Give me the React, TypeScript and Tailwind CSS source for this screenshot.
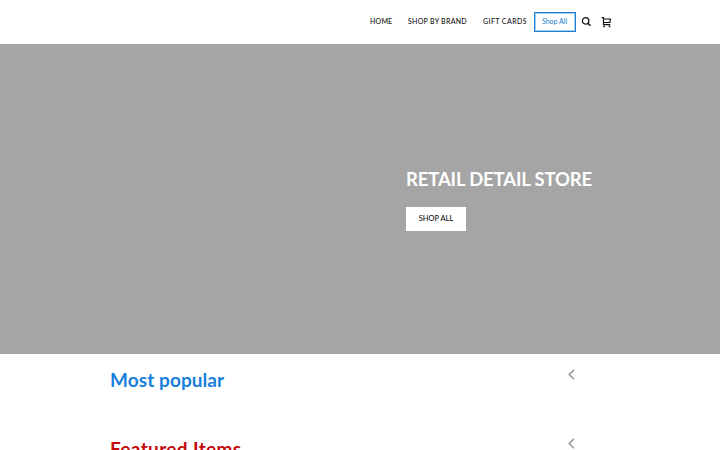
const navLinks = [
  { label: "HOME", style: "w-[22px] tracking-[0.2px]" },
  { label: "SHOP BY BRAND", style: "w-[59px] tracking-[0.28px]" },
  { label: "GIFT CARDS", style: "w-[44px] tracking-[0.42px]" },
];

const SearchIcon = () => (
  <svg viewBox="0 0 10 10" className="size-[10px]" fill="none" stroke="#111" strokeWidth="1.3">
    <circle cx="4.6" cy="3.9" r="3.2" />
    <path d="M6.9 6.2L9.5 8.8" />
  </svg>
);

const CartIcon = () => (
  <svg viewBox="0 0 10 11" className="h-[11px] w-[10px]" fill="none" stroke="#111" strokeWidth="1.2">
    <path d="M0.7 0.7H2.5V7.7H9.3M2.5 2H9.4L8.8 5.5H2.5" />
    <circle cx="3.1" cy="9.4" r="0.9" fill="#111" stroke="none" />
    <circle cx="8.5" cy="9.4" r="0.9" fill="#111" stroke="none" />
  </svg>
);

const Header = () => (
  <header className="flex h-11 items-center justify-end bg-white pr-[109px]">
    <nav className="flex items-center gap-4 pb-px text-[7px] font-medium text-[#111]">
      {navLinks.map((link) => (
        <a key={link.label} href="#" className={`whitespace-nowrap ${link.style}`}>
          {link.label}
        </a>
      ))}
    </nav>
    <a
      href="#"
      className="ml-[7px] flex h-5 w-[42px] items-center justify-center border border-[#1b7fd4] pb-px pr-px text-[7px] text-[#1b7fd4] ring-1 ring-inset ring-[#1b7fd4]/40"
    >
      Shop All
    </a>
    <button className="ml-[5px]" aria-label="Search">
      <SearchIcon />
    </button>
    <button className="ml-[10px]" aria-label="Cart">
      <CartIcon />
    </button>
  </header>
);

const Hero = () => (
  <section className="h-[310px] bg-[#a5a5a5] pl-[406px] pt-[123px]">
    <h1 className="whitespace-nowrap text-[18.5px] font-bold leading-6 tracking-[-0.15px] text-white">
      RETAIL DETAIL STORE
    </h1>
    <button className="mt-4 flex h-6 w-[60px] items-center justify-center bg-white text-[7.5px] font-medium text-[#111]">
      SHOP ALL
    </button>
  </section>
);

type ProductRowProps = {
  title: string;
  style: string;
};

const ProductRow = ({ title, style }: ProductRowProps) => (
  <section className="flex h-[69px] items-start justify-between pl-[110px] pr-[145px] pt-[14px]">
    <h2 className={`whitespace-nowrap text-[19px] font-bold leading-6 ${style}`}>{title}</h2>
    <button className="mt-px" aria-label="Previous">
      <svg viewBox="0 0 7 11" className="h-[11px] w-[7px]" fill="none" stroke="#999" strokeWidth="1.5">
        <path d="M6 0.9L1.2 5.6L6 10.3" />
      </svg>
    </button>
  </section>
);

const App = () => {
  return (
    <div className="h-screen overflow-hidden bg-white font-[Lato,sans-serif]">
      <Header />
      <Hero />
      <ProductRow title="Most popular" style="text-[#1680dc] tracking-[0.08px]" />
      <ProductRow title="Featured Items" style="text-[#c5080c] tracking-[0.36px]" />
    </div>
  );
};

export default App;
